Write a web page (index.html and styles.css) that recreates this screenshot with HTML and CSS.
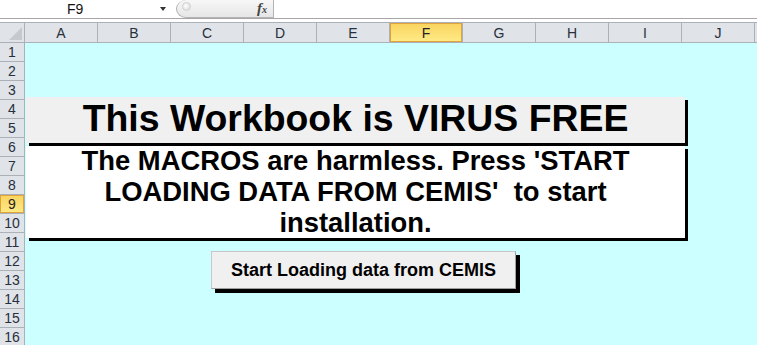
FILE: index.html
```html
<!DOCTYPE html>
<html>
<head>
<meta charset="utf-8">
<link rel="stylesheet" href="styles.css">
</head>
<body>
<div class="formula-bar">
  <div class="namebox"><span class="name">F9</span><span class="arrow"></span></div>
  <div class="pill"><span class="knob"></span><span class="fx">f<span class="x">x</span></span></div>
  <div class="input"></div>
</div>
<div class="sheet">
  <div class="grid">
    <div class="corner"><svg width="14" height="14" viewBox="0 0 14 14"><polygon points="14,1 14,14 1,14" fill="#c6c9cd"/></svg></div>
    <div class="ch">A</div><div class="ch">B</div><div class="ch">C</div><div class="ch">D</div><div class="ch">E</div>
    <div class="ch sel">F</div><div class="ch">G</div><div class="ch">H</div><div class="ch">I</div><div class="ch">J</div><div class="ch last"></div>

    <div class="rh">1</div><div class="row"></div>
    <div class="rh">2</div><div class="row"></div>
    <div class="rh">3</div><div class="row"></div>
    <div class="rh">4</div><div class="row"></div>
    <div class="rh">5</div><div class="row"></div>
    <div class="rh">6</div><div class="row"></div>
    <div class="rh">7</div><div class="row"></div>
    <div class="rh">8</div><div class="row"></div>
    <div class="rh sel">9</div><div class="row"></div>
    <div class="rh">10</div><div class="row"></div>
    <div class="rh">11</div><div class="row"></div>
    <div class="rh">12</div><div class="row"></div>
    <div class="rh">13</div><div class="row"></div>
    <div class="rh">14</div><div class="row"></div>
    <div class="rh">15</div><div class="row"></div>
    <div class="rh">16</div><div class="row"></div>
  </div>
  <div class="canvas">
    <div class="title-box">This Workbook is VIRUS FREE</div>
    <div class="msg-box"><p class="msg">The MACROS are harmless. Press 'START<br>LOADING DATA FROM CEMIS'&nbsp; to start<br>installation.</p></div>
    <div class="btn">Start Loading data from CEMIS</div>
  </div>
</div>
</body>
</html>
```

FILE: styles.css
```css
* { box-sizing: border-box; }
html, body { margin: 0; padding: 0; background: #ffffff; overflow: hidden; }
body { width: 757px; height: 345px; font-family: "Liberation Sans", Arial, sans-serif; }

.formula-bar {
  display: flex;
  height: 19px;
  border-bottom: 1px solid #a7a7a7;
  margin-bottom: 3px;
  background: #fff;
}
.namebox {
  width: 176px;
  position: relative;
  display: flex;
  align-items: center;
}
.name {
  margin-left: 67px;
  font-size: 14px;
  color: #111;
  line-height: 16px;
}
.arrow {
  position: absolute;
  left: 160px;
  top: 7px;
  width: 0; height: 0;
  border-left: 3.5px solid transparent;
  border-right: 3.5px solid transparent;
  border-top: 4px solid #333;
}
.pill {
  width: 98px;
  height: 18px;
  border: 1px solid #b3b3b3;
  border-top: none;
  border-top-left-radius: 10px 9px;
  border-bottom-left-radius: 10px 9px;
  background: linear-gradient(#f7f7f7, #e6e6e6);
  display: flex;
  align-items: center;
  justify-content: space-between;
  padding: 0 6px 0 5px;
}
.knob {
  width: 9px; height: 9px;
  border-radius: 50%;
  background: radial-gradient(circle at 40% 40%, #ffffff, #d6d6d6);
  border: 1px solid #d0d0d0;
  margin-top: -4px;
}
.fx {
  font-family: "Liberation Serif", "Times New Roman", serif;
  font-style: italic;
  font-weight: bold;
  font-size: 15px;
  color: #444;
  line-height: 17px;
}
.fx .x { font-size: 10px; }
.input { flex: 1; }

.sheet { position: relative; }
.grid {
  display: grid;
  grid-template-columns: 25px repeat(10, 73px) 1fr;
  grid-template-rows: 21px repeat(16, 19px);
}
.corner {
  background: #e0e3e8;
  border-top: 1px solid #abb1b8;
  border-right: 1px solid #abb1b8;
  border-bottom: 1px solid #abb1b8;
  display: flex;
  align-items: flex-end;
  justify-content: flex-end;
  padding: 0 2px 2px 0;
}
.ch {
  background: #e0e3e8;
  border-top: 1px solid #abb1b8;
  border-right: 1px solid #abb1b8;
  border-bottom: 1px solid #abb1b8;
  font-size: 14px;
  color: #27303c;
  display: flex;
  align-items: center;
  justify-content: center;
  line-height: 16px;
}
.ch.last { border-right: none; }
.ch.sel, .rh.sel {
  background: linear-gradient(#f9d35f, #ffeb86);
  box-shadow: inset 0 0 0 1px #e0a33c;
  color: #222;
}
.rh {
  background: #e0e3e8;
  border-right: 1px solid #abb1b8;
  border-bottom: 1px solid #abb1b8;
  font-size: 14px;
  color: #27303c;
  display: flex;
  align-items: center;
  justify-content: center;
  line-height: 16px;
}
.row {
  grid-column: 2 / -1;
  background: #ccffff;
}

.canvas {
  position: absolute;
  left: 25px;
  top: 21px;
  width: 700px;
  padding: 54px 0 0 1px;
  display: flex;
  flex-direction: column;
  align-items: flex-start;
}
.title-box {
  width: 659px;
  height: 46px;
  background: #f0f0f0;
  box-shadow: 3px 3px 0 #000;
  text-align: center;
  font-weight: bold;
  font-size: 37.4px;
  line-height: 42px;
  color: #000;
  white-space: nowrap;
}
.msg-box {
  width: 659px;
  height: 92px;
  margin-top: 3px;
  background: #fff;
  box-shadow: 3px 3px 0 #000;
  overflow: visible;
}
.msg {
  margin: -1px 0 0 0;
  text-align: center;
  font-weight: bold;
  font-size: 27.4px;
  line-height: 31px;
  color: #000;
  white-space: nowrap;
}
.btn {
  margin: 13px 0 0 185px;
  width: 305px;
  height: 38px;
  background: #f0f0f0;
  border-top: 1px solid #c9c9c9;
  border-left: 1px solid #c9c9c9;
  border-right: 1px solid #a0a0a0;
  border-bottom: 1px solid #a0a0a0;
  box-shadow: 4px 4px 0 #000;
  display: flex;
  align-items: center;
  justify-content: center;
  font-weight: bold;
  font-size: 18px;
  color: #000;
  padding-top: 1px;
}
```
